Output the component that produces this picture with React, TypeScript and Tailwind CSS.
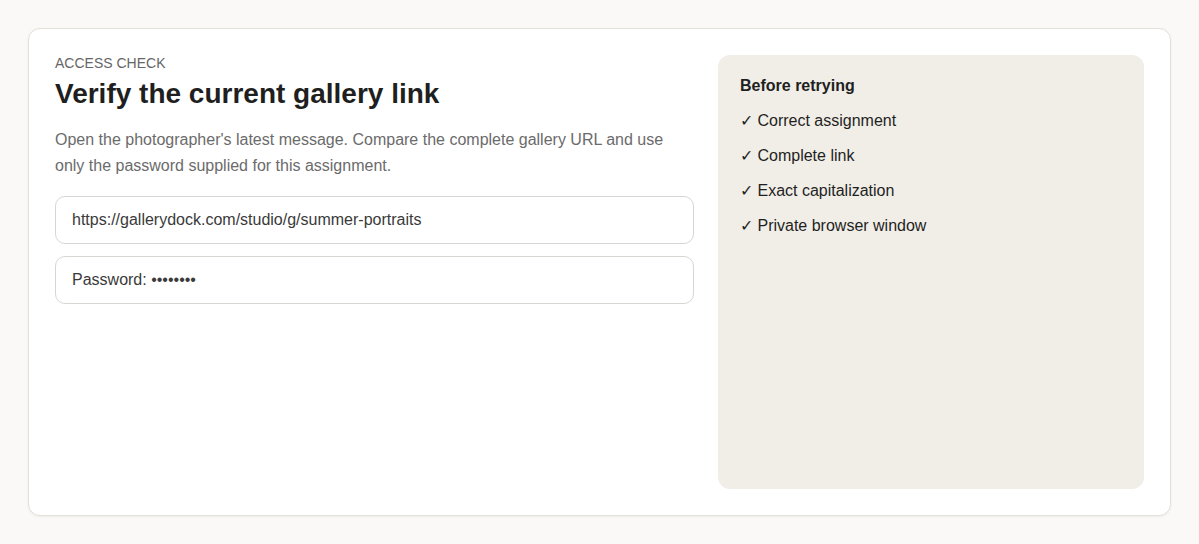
const CHECKS = [
  "Correct assignment",
  "Complete link",
  "Exact capitalization",
  "Private browser window",
];

export default function App() {
  return (
    <div className="h-[544px] bg-[#faf9f7] p-7 font-['Liberation_Sans',Arial,sans-serif]">
      <div className="h-full rounded-xl border border-[#e3e0da] bg-white p-[26px] shadow-[0_1px_3px_rgba(0,0,0,0.05)]">
        <div className="grid h-full grid-cols-[1.5fr_1fr] gap-6">
          {/* left: message + fields */}
          <div className="flex flex-col">
            <p className="text-sm leading-4 uppercase text-[#666]">Access check</p>
            <h1 className="mt-1.5 text-[28px] leading-[34px] font-bold text-[#1f1f1f]">
              Verify the current gallery link
            </h1>
            <p className="mt-4 text-base leading-[26px] text-[#6b6b6b]">
              Open the photographer's latest message. Compare the complete gallery URL and use
              only the password supplied for this assignment.
            </p>
            <div className="mt-[17px] flex h-12 items-center rounded-[10px] border border-[#d8d6d2] px-4 text-base text-[#3a3a3a]">
              https://gallerydock.com/studio/g/summer-portraits
            </div>
            <div className="mt-3 flex h-12 items-center rounded-[10px] border border-[#d8d6d2] px-4 text-base text-[#3a3a3a]">
              Password: ••••••••
            </div>
          </div>

          {/* right: checklist */}
          <div className="rounded-xl bg-[#f1eee7] px-[22px] pt-5">
            <h2 className="text-base leading-[22px] font-bold text-[#1f1f1f]">Before retrying</h2>
            <ul className="mt-[13px] flex flex-col gap-[13px]">
              {CHECKS.map((c) => (
                <li key={c} className="text-base leading-[22px] text-[#1f1f1f]">
                  ✓ {c}
                </li>
              ))}
            </ul>
          </div>
        </div>
      </div>
    </div>
  );
}
